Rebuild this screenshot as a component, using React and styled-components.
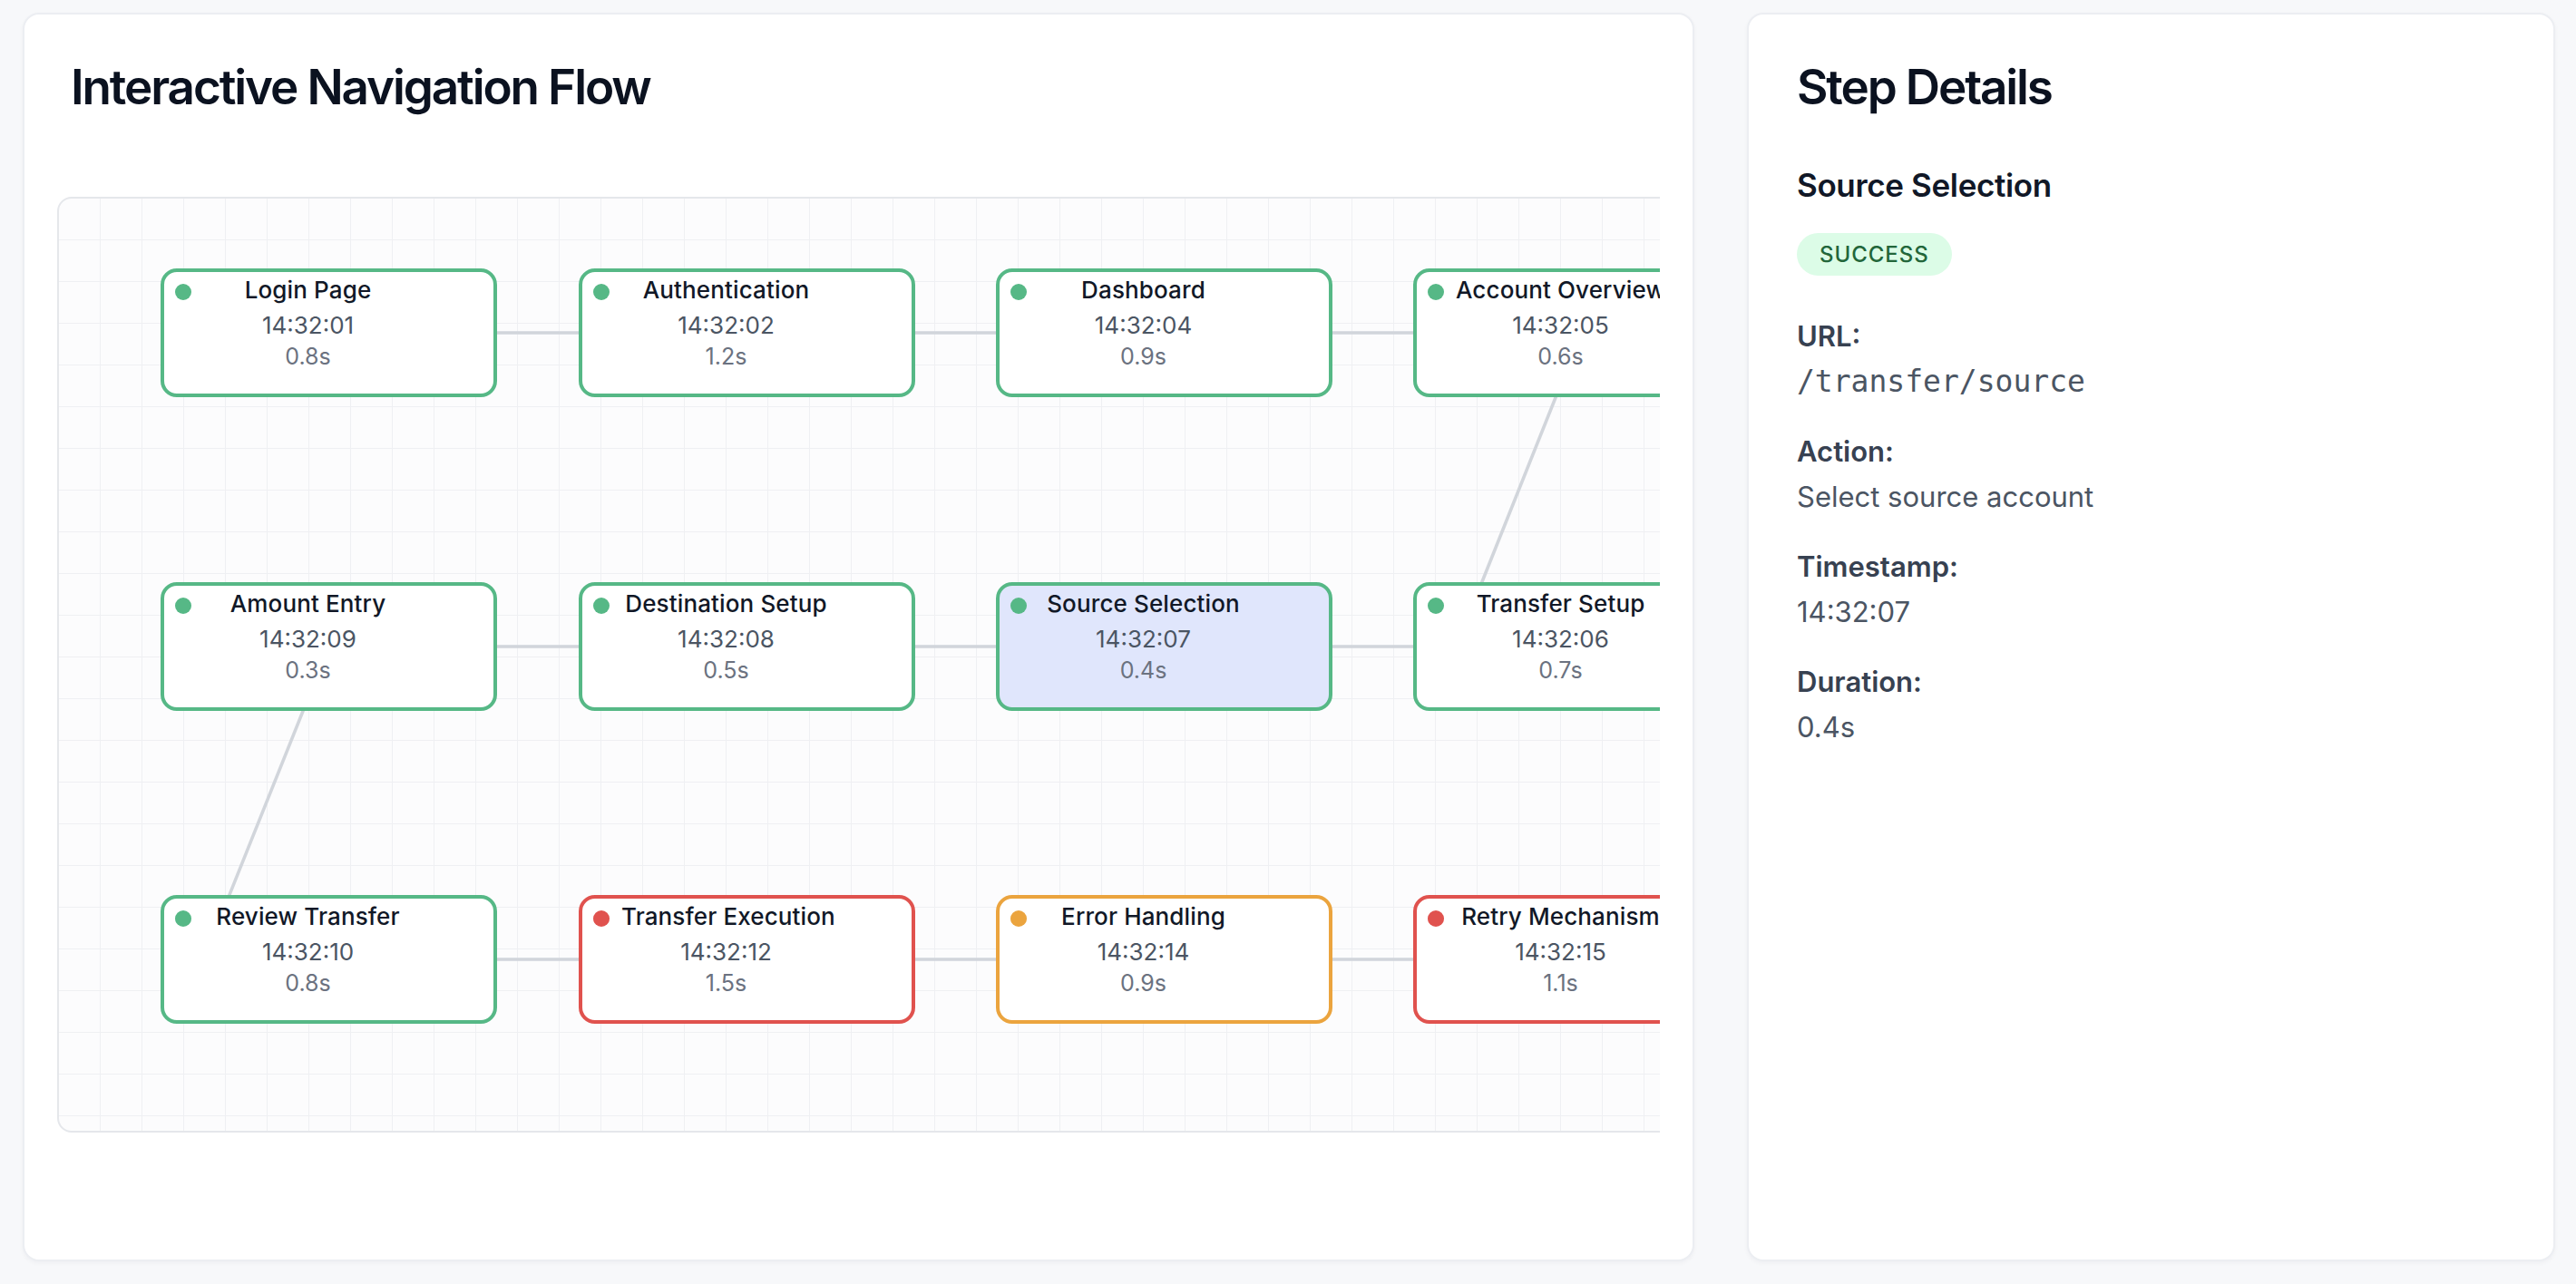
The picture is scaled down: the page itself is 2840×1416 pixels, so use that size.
import React from "react";
import styled, { createGlobalStyle } from "styled-components";

const GlobalStyle = createGlobalStyle`
  *, *::before, *::after { box-sizing: border-box; }
  html, body { margin: 0; padding: 0; background: #f7f8fa; }
  body {
    font-family: Inter, "Noto Sans", "Liberation Sans", sans-serif;
    color: #111827;
    -webkit-font-smoothing: antialiased;
  }
`;

const STATUS = {
  success: "#56b886",
  error: "#e0524e",
  warning: "#eba43e",
};

const Page = styled.div`
  display: grid;
  grid-template-columns: minmax(0, 1fr) 891px;
  gap: 58px;
  height: 100vh;
  padding: 14px 23px 25px 25px;
`;

const Card = styled.section`
  min-width: 0;
  display: flex;
  flex-direction: column;
  background: #ffffff;
  border: 2px solid #eceef2;
  border-radius: 18px;
  box-shadow: 0 2px 5px rgba(16, 24, 40, 0.04);
  padding: ${(p) => p.$pad};
`;

const Heading = styled.h1`
  margin: 0 0 ${(p) => p.$gap}px;
  padding: 0 ${(p) => p.$indent || 0}px;
  font-size: 53px;
  line-height: 64px;
  font-weight: 600;
  letter-spacing: -0.04em;
  color: #0b1220;
  white-space: nowrap;
`;

const Viewport = styled.div`
  height: 1032px;
  overflow: hidden;
  flex-shrink: 0;
`;

const Canvas = styled.div`
  position: relative;
  width: 2100px;
  height: 1032px;
  border: 2px solid #e5e7eb;
  border-radius: 16px;
  background-color: #fcfcfd;
  background-image: linear-gradient(to right, #eff0f3 1px, transparent 1px),
    linear-gradient(to bottom, #eff0f3 1px, transparent 1px);
  background-size: 46px 46px;
  background-position: 45px 45px;
`;

const Edges = styled.svg`
  position: absolute;
  left: 0;
  top: 0;
  overflow: visible;
`;

const Node = styled.div`
  position: absolute;
  left: ${(p) => p.$x}px;
  top: ${(p) => p.$y}px;
  width: 371px;
  height: 142px;
  border: 4px solid ${(p) => STATUS[p.$status]};
  border-radius: 18px;
  background: ${(p) => (p.$selected ? "#e0e6fc" : "#ffffff")};
  padding: 3px 89px 0 43px;
  text-align: center;
  white-space: nowrap;
`;

const Dot = styled.span`
  position: absolute;
  left: 12px;
  top: 13px;
  width: 18px;
  height: 18px;
  border-radius: 50%;
  background: ${(p) => STATUS[p.$status]};
`;

const NodeTitle = styled.div`
  font-size: 26px;
  line-height: 34px;
  font-weight: 500;
  color: #111827;
  letter-spacing: 0.005em;
`;

const NodeTime = styled.div`
  margin-top: 4px;
  font-size: 26px;
  line-height: 36px;
  color: #4b5563;
`;

const NodeDuration = styled.div`
  font-size: 25px;
  line-height: 32px;
  color: #6b7280;
`;

const SubHeading = styled.h2`
  margin: 0 0 29px;
  font-size: 35px;
  line-height: 48px;
  font-weight: 600;
  letter-spacing: -0.01em;
  color: #111827;
`;

const Badge = styled.span`
  align-self: flex-start;
  display: inline-flex;
  align-items: center;
  height: 47px;
  padding: 0 25px;
  margin-bottom: 44px;
  border-radius: 999px;
  background: #dcfce7;
  color: #22663a;
  font-size: 24px;
  font-weight: 500;
  letter-spacing: 0.04em;
`;

const Field = styled.div`
  margin-bottom: 31px;
`;

const Label = styled.div`
  font-size: 31px;
  line-height: 46px;
  font-weight: 600;
  color: #374151;
`;

const Value = styled.div`
  margin-top: 4px;
  font-size: ${(p) => (p.$mono ? 33 : 31)}px;
  line-height: 46px;
  color: #4b5563;
  font-family: ${(p) =>
    p.$mono
      ? '"DejaVu Sans Mono", "Liberation Mono", monospace'
      : 'Inter, "Noto Sans", sans-serif'};
`;

const COLS = [112, 573, 1033, 1493];
const ROWS = [77, 423, 768];

const nodes = [
  { id: 1, name: "Login Page", time: "14:32:01", dur: "0.8s", status: "success", c: 0, r: 0 },
  { id: 2, name: "Authentication", time: "14:32:02", dur: "1.2s", status: "success", c: 1, r: 0 },
  { id: 3, name: "Dashboard", time: "14:32:04", dur: "0.9s", status: "success", c: 2, r: 0 },
  { id: 4, name: "Account Overview", time: "14:32:05", dur: "0.6s", status: "success", c: 3, r: 0 },
  { id: 5, name: "Transfer Setup", time: "14:32:06", dur: "0.7s", status: "success", c: 3, r: 1 },
  { id: 6, name: "Source Selection", time: "14:32:07", dur: "0.4s", status: "success", c: 2, r: 1 },
  { id: 7, name: "Destination Setup", time: "14:32:08", dur: "0.5s", status: "success", c: 1, r: 1 },
  { id: 8, name: "Amount Entry", time: "14:32:09", dur: "0.3s", status: "success", c: 0, r: 1 },
  { id: 9, name: "Review Transfer", time: "14:32:10", dur: "0.8s", status: "success", c: 0, r: 2 },
  { id: 10, name: "Transfer Execution", time: "14:32:12", dur: "1.5s", status: "error", c: 1, r: 2 },
  { id: 11, name: "Error Handling", time: "14:32:14", dur: "0.9s", status: "warning", c: 2, r: 2 },
  { id: 12, name: "Retry Mechanism", time: "14:32:15", dur: "1.1s", status: "error", c: 3, r: 2 },
];

const center = (n) => ({ x: COLS[n.c] + 185.5, y: ROWS[n.r] + 71 });

const edges = nodes.slice(0, -1).map((n, i) => {
  const a = center(n);
  const b = center(nodes[i + 1]);
  const shift = a.y !== b.y ? -138 : 0;
  return { key: n.id, x1: a.x, y1: a.y, x2: b.x + shift, y2: b.y };
});

const selectedId = 6;

export default function App() {
  const selected = nodes.find((n) => n.id === selectedId);
  return (
    <>
      <GlobalStyle />
      <Page>
        <Card $pad="48px 36px 0">
          <Heading $gap={89} $indent={15}>
            Interactive Navigation Flow
          </Heading>
          <Viewport>
            <Canvas>
              <Edges width="2096" height="1028">
                {edges.map((e) => (
                  <line
                    key={e.key}
                    x1={e.x1}
                    y1={e.y1}
                    x2={e.x2}
                    y2={e.y2}
                    stroke="#d1d5db"
                    strokeWidth="3.6"
                  />
                ))}
              </Edges>
              {nodes.map((n) => (
                <Node
                  key={n.id}
                  $x={COLS[n.c]}
                  $y={ROWS[n.r]}
                  $status={n.status}
                  $selected={n.id === selectedId}
                >
                  <Dot $status={n.status} />
                  <NodeTitle>{n.name}</NodeTitle>
                  <NodeTime>{n.time}</NodeTime>
                  <NodeDuration>{n.dur}</NodeDuration>
                </Node>
              ))}
            </Canvas>
          </Viewport>
        </Card>
        <Card $pad="48px 53px 0">
          <Heading $gap={52}>Step Details</Heading>
          <SubHeading>{selected.name}</SubHeading>
          <Badge>SUCCESS</Badge>
          <Field>
            <Label>URL:</Label>
            <Value $mono>/transfer/source</Value>
          </Field>
          <Field>
            <Label>Action:</Label>
            <Value>Select source account</Value>
          </Field>
          <Field>
            <Label>Timestamp:</Label>
            <Value>{selected.time}</Value>
          </Field>
          <Field>
            <Label>Duration:</Label>
            <Value>{selected.dur}</Value>
          </Field>
        </Card>
      </Page>
    </>
  );
}
